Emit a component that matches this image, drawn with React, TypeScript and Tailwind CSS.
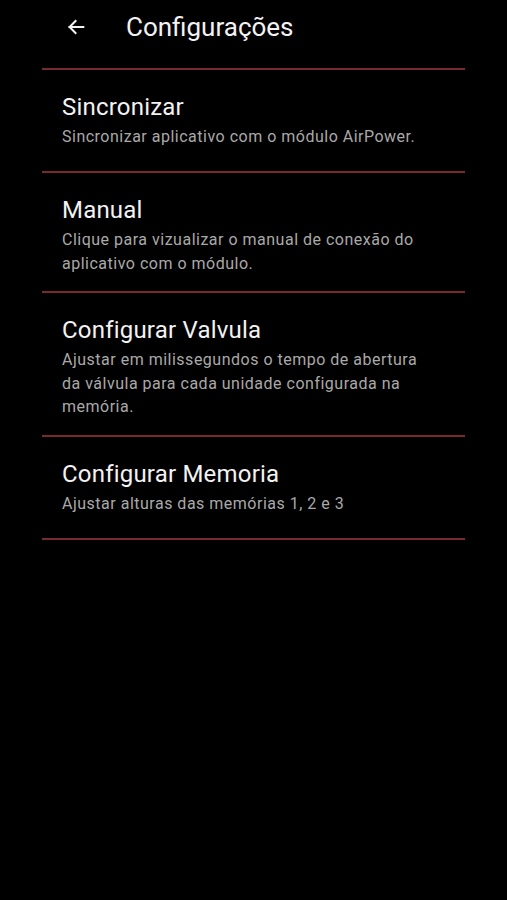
import React from "react";

const items = [
  { title: "Sincronizar", desc: "Sincronizar aplicativo com o módulo AirPower." },
  { title: "Manual", desc: "Clique para vizualizar o manual de conexão do aplicativo com o módulo." },
  { title: "Configurar Valvula", desc: "Ajustar em milissegundos o tempo de abertura da válvula para cada unidade configurada na memória." },
  { title: "Configurar Memoria", desc: "Ajustar alturas das memórias 1, 2 e 3" },
];

export default function App() {
  return (
    <div className="min-h-[900px] w-full bg-black text-white" style={{ fontFamily: "Roboto, 'Liberation Sans', sans-serif" }}>
      <div className="flex h-[54px] items-center">
        <div className="ml-[64px] flex h-6 w-6 items-center justify-center">
          <svg width="22" height="22" viewBox="0 0 24 24" fill="none" stroke="#f2f2f2" strokeWidth="2.2" strokeLinecap="square">
            <path d="M20 12H5" />
            <path d="M11.5 5.5L5 12l6.5 6.5" />
          </svg>
        </div>
        <div className="ml-[38px] text-[26px] leading-[30px] text-[#f2f2f2]">Configurações</div>
      </div>
      <div className="mx-[42px] mt-[14px]">
        <div className="h-[2px] bg-[#7a2a2e]" />
        {items.map((it) => (
          <div key={it.title}>
            <div className="min-h-[101px] pl-[20px] pr-[30px] pt-[23px] pb-[16px]">
              <div className="text-[24px] leading-[28px] tracking-[0.2px] text-[#f2f2f2]">{it.title}</div>
              <div className="mt-[4px] text-[16px] leading-[23.5px] tracking-[0.5px] text-[#a9a9a9]">{it.desc}</div>
            </div>
            <div className="h-[2px] bg-[#7a2a2e]" />
          </div>
        ))}
      </div>
    </div>
  );
}
